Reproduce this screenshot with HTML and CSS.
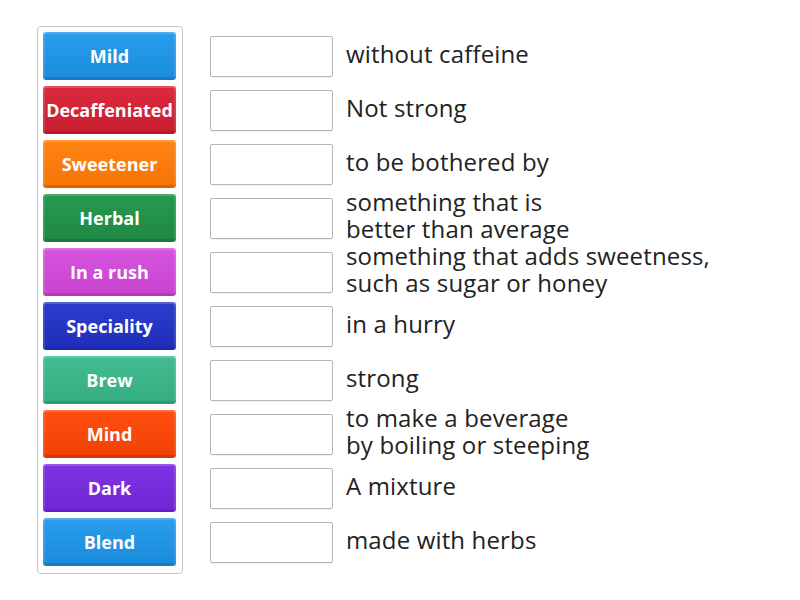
FILE: index.html
```html
<!DOCTYPE html>
<html>
<head>
<meta charset="utf-8">
<link rel="stylesheet" href="styles.css">
</head>
<body>
<div class="page">
  <div class="bank">
    <div class="tile c-blue">Mild</div>
    <div class="tile c-red">Decaffeniated</div>
    <div class="tile c-orange">Sweetener</div>
    <div class="tile c-green">Herbal</div>
    <div class="tile c-pink">In a rush</div>
    <div class="tile c-navy">Speciality</div>
    <div class="tile c-teal">Brew</div>
    <div class="tile c-redorange">Mind</div>
    <div class="tile c-purple">Dark</div>
    <div class="tile c-blue">Blend</div>
  </div>
  <div class="rows">
    <div class="row"><div class="slot"></div><div class="def">without caffeine</div></div>
    <div class="row"><div class="slot"></div><div class="def">Not strong</div></div>
    <div class="row"><div class="slot"></div><div class="def">to be bothered by</div></div>
    <div class="row"><div class="slot"></div><div class="def">something that is<br>better than average</div></div>
    <div class="row"><div class="slot"></div><div class="def">something that adds sweetness,<br>such as sugar or honey</div></div>
    <div class="row"><div class="slot"></div><div class="def">in a hurry</div></div>
    <div class="row"><div class="slot"></div><div class="def">strong</div></div>
    <div class="row"><div class="slot"></div><div class="def">to make a beverage<br>by boiling or steeping</div></div>
    <div class="row"><div class="slot"></div><div class="def">A mixture</div></div>
    <div class="row"><div class="slot"></div><div class="def">made with herbs</div></div>
  </div>
</div>
</body>
</html>
```
FILE: styles.css
```css
html, body {
  margin: 0;
  padding: 0;
  background: #ffffff;
}
.page {
  display: flex;
  align-items: flex-start;
  padding: 26px 0 0 37px;
  gap: 27px;
  font-family: "Open Sans", "Liberation Sans", sans-serif;
}
.bank {
  display: flex;
  flex-direction: column;
  gap: 6px;
  padding: 5px 6px 7px 5px;
  border: 1px solid #c4c4c4;
  border-radius: 4px;
  width: 133px;
}
.tile {
  height: 48px;
  box-sizing: border-box;
  border-radius: 3px;
  display: flex;
  align-items: center;
  justify-content: center;
  color: #ffffff;
  font-weight: 700;
  font-size: 18px;
  box-shadow: inset 0 2px 0 rgba(255,255,255,0.18), inset 2px 0 0 rgba(255,255,255,0.12), inset -2px 0 0 rgba(255,255,255,0.12), inset 0 -3px 0 rgba(0,0,0,0.12);
}
.c-blue { background: linear-gradient(#2a9ded, #1a8bdb); }
.c-red { background: linear-gradient(#dc2a3e, #c81d30); }
.c-orange { background: linear-gradient(#ff8414, #f57405); }
.c-green { background: linear-gradient(#279a4f, #1e8843); }
.c-pink { background: linear-gradient(#d655dd, #c843d0); }
.c-navy { background: linear-gradient(#2a3dcc, #1f2eb9); }
.c-teal { background: linear-gradient(#42bc90, #35ad82); }
.c-redorange { background: linear-gradient(#ff4f10, #f14005); }
.c-purple { background: linear-gradient(#8033e3, #7026d6); }
.rows {
  display: flex;
  flex-direction: column;
  gap: 13px;
  padding-top: 10px;
}
.row {
  display: flex;
  align-items: center;
  height: 41px;
  gap: 13px;
}
.slot {
  width: 123px;
  height: 41px;
  box-sizing: border-box;
  border: 1px solid #b5b5b5;
  border-radius: 2px;
  background: #ffffff;
  box-shadow: 0 1px 1px rgba(0,0,0,0.06);
  flex: none;
}
.def {
  font-size: 24px;
  line-height: 27px;
  letter-spacing: 0.15px;
  margin-bottom: 7px;
  color: #222222;
  white-space: nowrap;
}
```
